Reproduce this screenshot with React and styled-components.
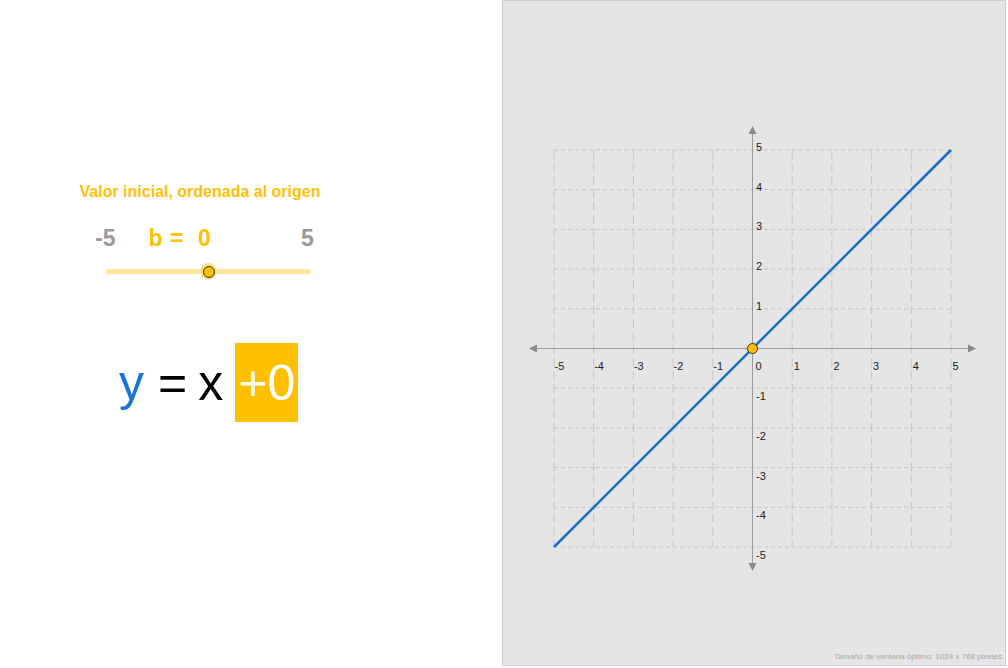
import React from "react";
import styled, { createGlobalStyle } from "styled-components";

const Global = createGlobalStyle`
  html, body { margin: 0; padding: 0; background: #fff; }
  body { font-family: "Liberation Sans", Arial, sans-serif; }
`;

const YELLOW = "#ffc000";
const BLUE = "#1976d2";

const Page = styled.div`
  display: grid;
  grid-template-columns: 502px 504px;
  width: 1008px;
  height: 668px;
`;

const LeftPanel = styled.section`
  display: flex;
  flex-direction: column;
  align-items: flex-start;
  padding: 183px 0 0 70px;
  background: #fff;
`;

const Controls = styled.div`
  display: flex;
  flex-direction: column;
  align-items: center;
  width: 260px;
`;

const Title = styled.div`
  font-size: 16px;
  font-weight: bold;
  color: ${YELLOW};
  line-height: 18px;
  white-space: nowrap;
`;

const ValueRow = styled.div`
  display: flex;
  align-items: baseline;
  width: 260px;
  margin-top: 24px;
  font-size: 23px;
  font-weight: bold;
  line-height: 26px;
`;

const Bound = styled.span`
  color: #999;
  margin-left: ${(p) => p.$ml}px;
`;

const Current = styled.span`
  color: ${YELLOW};
  margin-left: ${(p) => p.$ml}px;
  word-spacing: 1px;
`;

const Slider = styled.div`
  position: relative;
  width: 205px;
  height: 5px;
  margin: 18px 0 0 36px;
  border-radius: 3px;
  background: #ffe699;
  align-self: flex-start;
`;

const Thumb = styled.div`
  position: absolute;
  left: ${(p) => p.$pos}%;
  top: 50%;
  width: 17px;
  height: 17px;
  margin: -8.5px 0 0 -8.5px;
  border-radius: 50%;
  background: #ffe08a;
  display: flex;
  align-items: center;
  justify-content: center;
  &::after {
    content: "";
    width: 10px;
    height: 10px;
    border-radius: 50%;
    background: ${YELLOW};
    border: 1px solid #333;
  }
`;

const Equation = styled.div`
  display: flex;
  align-items: center;
  margin: 69px 0 0 49px;
  font-size: 50px;
  line-height: 58px;
  color: #000;
  white-space: pre;
`;

const Var = styled.span`
  color: ${(p) => p.$color || "#000"};
  margin-left: ${(p) => p.$ml || 0}px;
`;

const Term = styled.span`
  display: flex;
  align-items: center;
  justify-content: center;
  width: 63px;
  height: 79px;
  margin-left: 12px;
  background: ${YELLOW};
  color: #fff;
  font-size: 50px;
  line-height: 58px;
`;

const RightPanel = styled.section`
  position: relative;
  box-sizing: border-box;
  height: 666px;
  border: 1px solid #cfcfcf;
  background: #e5e5e5;
`;

const Graph = styled.svg`
  display: block;
`;

const Footer = styled.div`
  position: absolute;
  right: 3px;
  bottom: 4px;
  font-size: 8px;
  color: #a8a8a8;
`;

const OX = 752.5;
const OY = 348.5;
const U = 39.7;
const px = (i) => OX + U * i;
const py = (j) => OY - U * j;
const ticks = [-5, -4, -3, -2, -1, 1, 2, 3, 4, 5];

function Plane() {
  return (
    <Graph width="502" height="664" viewBox="503 1 502 664">
      <g stroke="#c6c6c6" strokeWidth="1" fill="none">
        {ticks.map((j) => (
          <line key={"h" + j} x1={px(-5)} x2={px(5)} y1={py(j)} y2={py(j)} strokeDasharray="4 3" />
        ))}
        {ticks.map((i) => (
          <line key={"v" + i} x1={px(i)} x2={px(i)} y1={py(5)} y2={py(-5)} strokeDasharray="9 4" />
        ))}
      </g>
      <g stroke="#9a9a9a" strokeWidth="1">
        <line x1="533" x2="972" y1={OY} y2={OY} />
        <line x1={OX} x2={OX} y1="130" y2="567" />
      </g>
      <g fill="#8a8a8a">
        <polygon points={`529,${OY} 537,${OY - 4} 537,${OY + 4}`} />
        <polygon points={`976,${OY} 968,${OY - 4} 968,${OY + 4}`} />
        <polygon points={`${OX},126 ${OX - 4},134 ${OX + 4},134`} />
        <polygon points={`${OX},571 ${OX - 4},563 ${OX + 4},563`} />
      </g>
      <g fontFamily="Liberation Sans, Arial, sans-serif" fontSize="11" fill="#222">
        {ticks.map((i) => (
          <text key={"xl" + i} x={px(i) + (i < 0 ? 0.5 : 1.5)} y={OY + 21}>{i}</text>
        ))}
        <text x={OX + 3} y={OY + 21}>0</text>
        {ticks.map((j) => (
          <text key={"yl" + j} x={OX + 3.5} y={py(j) + (j > 0 ? 1 : 12)}>{j}</text>
        ))}
      </g>
      <line x1={px(-5)} y1={py(-5)} x2={px(5)} y2={py(5)} stroke="#1a6fc4" strokeWidth="2.5" />
      <circle cx={OX} cy={OY} r="5" fill={YELLOW} stroke="#333" strokeWidth="1" />
    </Graph>
  );
}

export default function App() {
  return (
    <>
      <Global />
      <Page>
        <LeftPanel>
          <Controls>
            <Title>Valor inicial, ordenada al origen</Title>
            <ValueRow>
              <Bound $ml={25}>-5</Bound>
              <Current $ml={33}>b = &nbsp;0</Current>
              <Bound $ml={90}>5</Bound>
            </ValueRow>
            <Slider>
              <Thumb $pos={50} />
            </Slider>
          </Controls>
          <Equation>
            <Var $color={BLUE}>y</Var>
            <Var $ml={14}>=</Var>
            <Var $ml={11}>x</Var>
            <Term>+0</Term>
          </Equation>
        </LeftPanel>
        <RightPanel>
          <Plane />
          <Footer>Tamaño de ventana óptimo: 1024 x 768 pixeles</Footer>
        </RightPanel>
      </Page>
    </>
  );
}
